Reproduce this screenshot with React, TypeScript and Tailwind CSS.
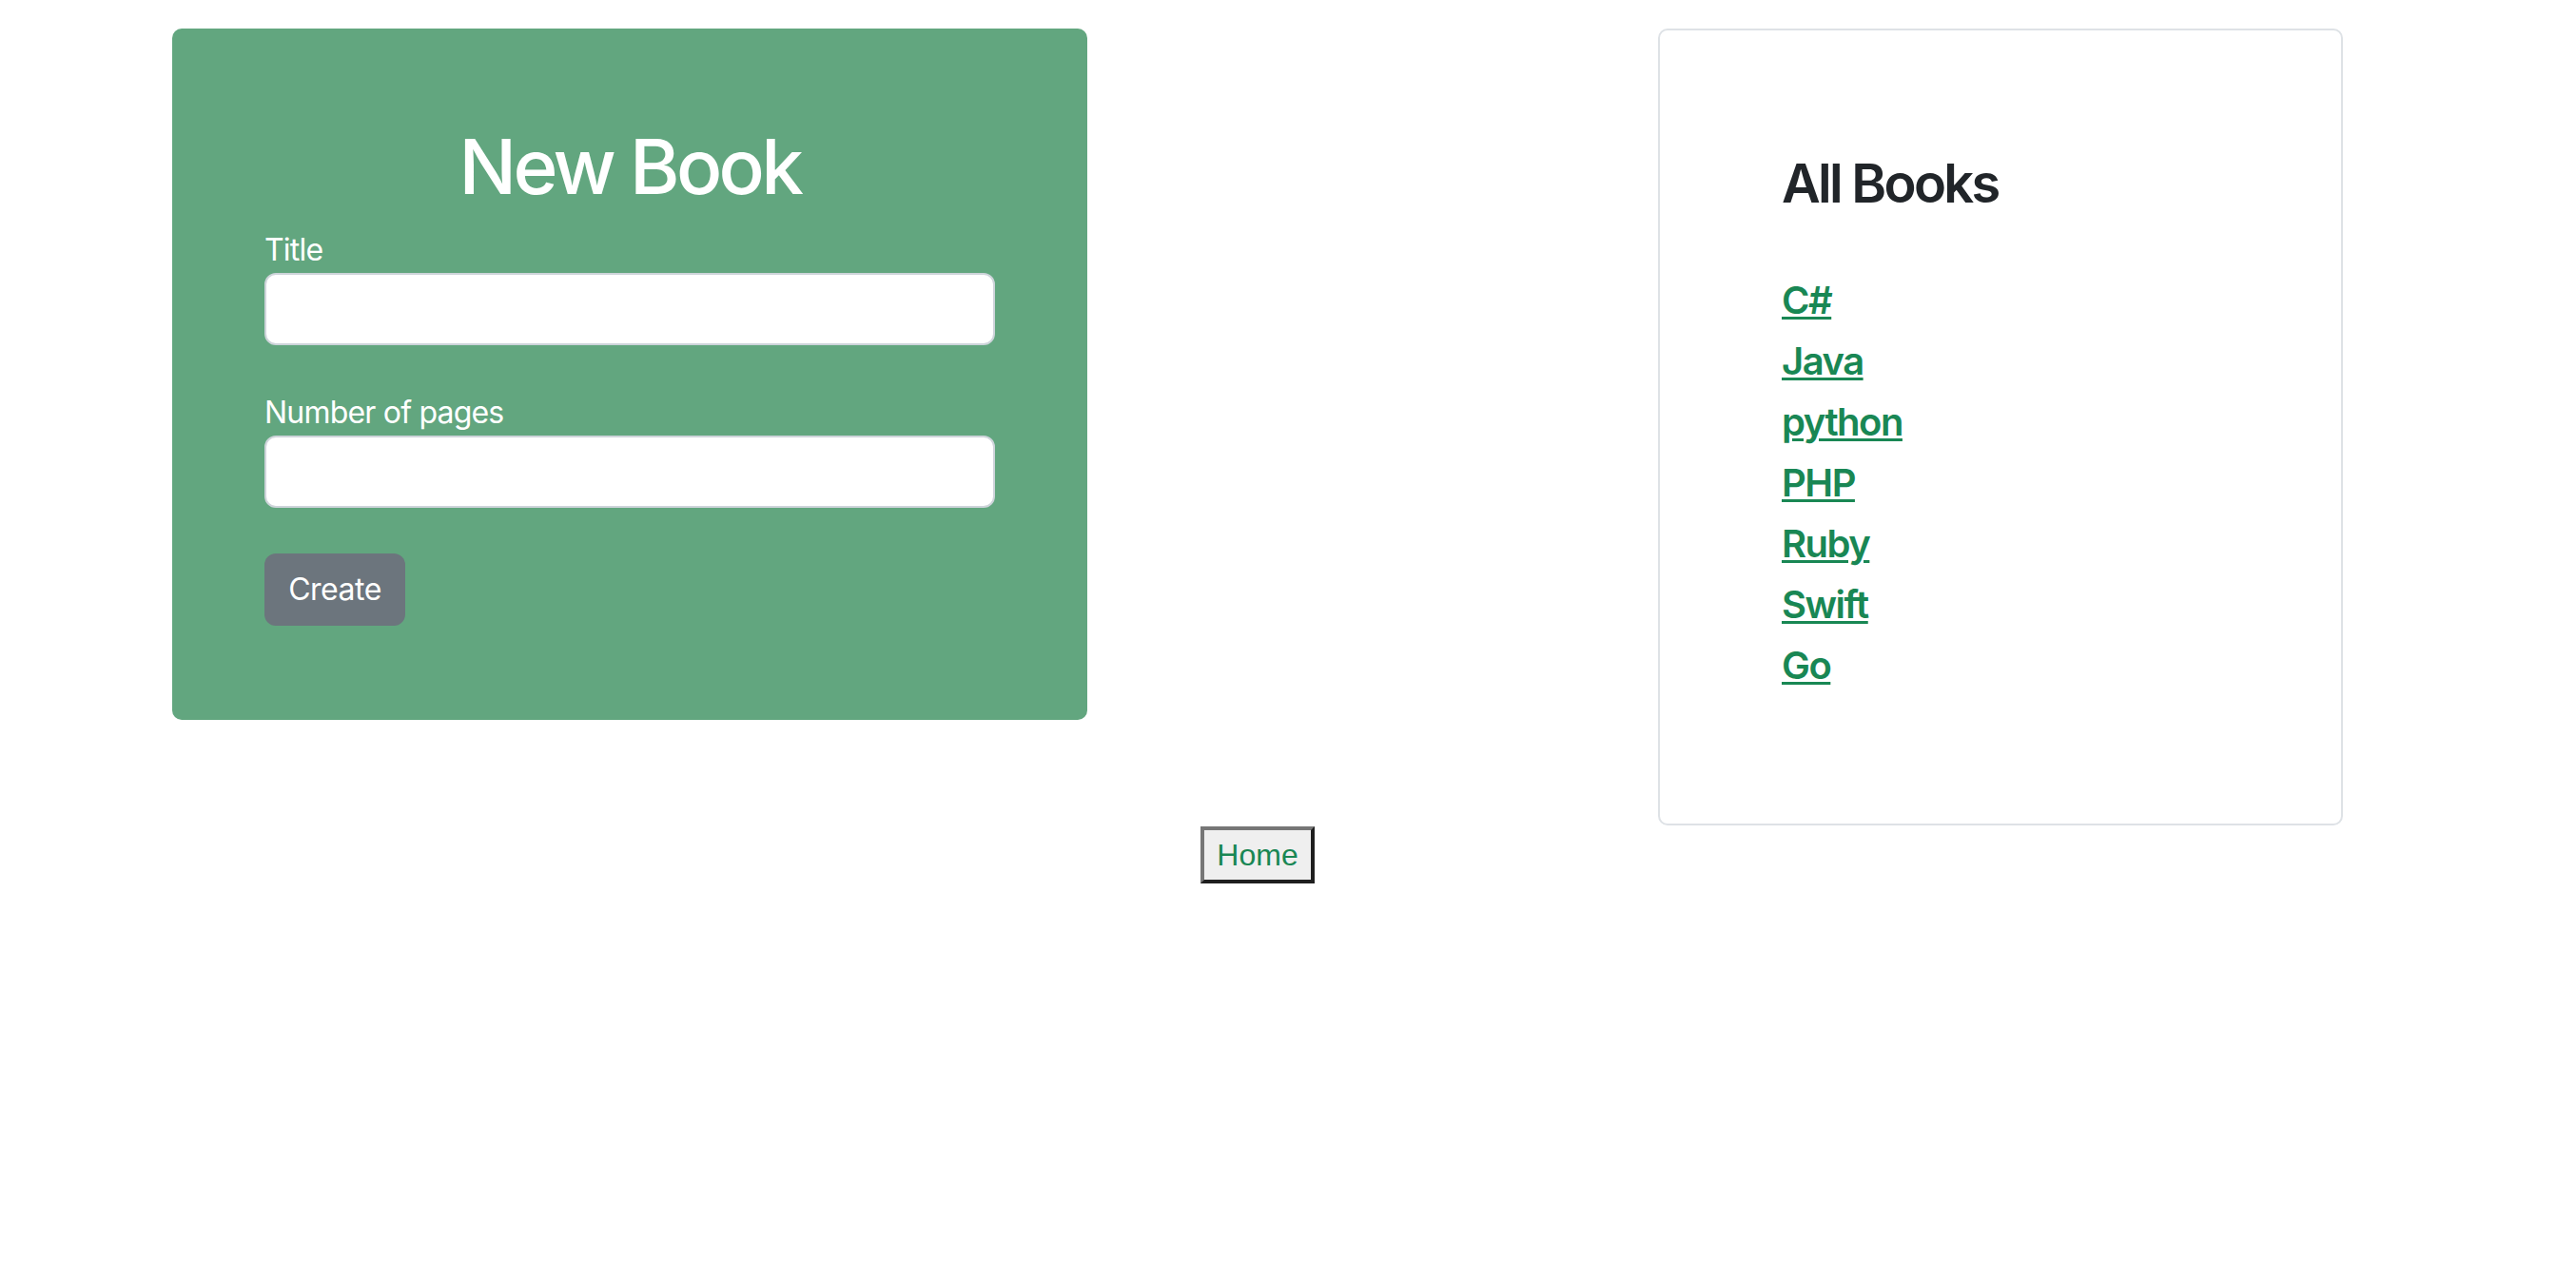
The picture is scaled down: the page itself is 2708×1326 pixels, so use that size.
import React from "react";

const books = ["C#", "Java", "python", "PHP", "Ruby", "Swift", "Go"];

export default function App() {
  return (
    <div className="min-h-[1326px] bg-white font-['Inter','Noto_Sans',sans-serif]">
      <div className="ml-[181px] w-[2282px] pt-[30px]">
        <div className="flex items-start justify-between">
          {/* New Book card */}
          <div className="w-[962px] rounded-[10px] bg-[#62a67f] px-[97px] pt-[97px] pb-[99px]">
            <h1 className="mb-[16px] text-center text-[80px] leading-[96px] font-medium tracking-[-3.6px] text-white">
              New Book
            </h1>
            <form onSubmit={(e) => e.preventDefault()}>
              <div className="mb-[47px]">
                <label className="block text-[32px] leading-[48px] tracking-[-0.8px] text-white">Title</label>
                <input
                  type="text"
                  className="block h-[76px] w-full rounded-[12px] border-2 border-[#ced4da] bg-white px-[24px] text-[32px] outline-none"
                />
              </div>
              <div className="mb-[48px]">
                <label className="block text-[32px] leading-[48px] tracking-[-0.8px] text-white">Number of pages</label>
                <input
                  type="text"
                  className="block h-[76px] w-full rounded-[12px] border-2 border-[#ced4da] bg-white px-[24px] text-[32px] outline-none"
                />
              </div>
              <button
                type="submit"
                className="h-[76px] w-[148px] rounded-[12px] bg-[#6c757d] text-[32px] leading-[48px] tracking-[-0.5px] text-white"
              >
                Create
              </button>
            </form>
          </div>

          {/* All Books card */}
          <div className="h-[838px] w-[720px] rounded-[10px] border-2 border-[#dee2e6] pl-[128px] pt-[128px]">
            <h3 className="text-[56px] leading-[67px] font-semibold tracking-[-2.7px] text-[#212529]">All Books</h3>
            <div className="mt-[65px]">
              {books.map((b) => (
                <h5 key={b} className="mb-[16px] text-[40px] leading-[48px] font-semibold tracking-[-1.5px]">
                  <a
                    href="#"
                    className="text-[#198754] underline decoration-[3px] underline-offset-[3px]"
                  >
                    {b}
                  </a>
                </h5>
              ))}
            </div>
          </div>
        </div>

        <div className="mt-[1px] text-center">
          <button className="h-[60px] border-4 border-t-[#767676] border-l-[#767676] border-b-[#1f1f1f] border-r-[#1f1f1f] bg-[#efefef] px-[13px] font-['Liberation_Sans',Arial,sans-serif] text-[32px] leading-[36px] text-[#198754]">
            Home
          </button>
        </div>
      </div>
    </div>
  );
}
